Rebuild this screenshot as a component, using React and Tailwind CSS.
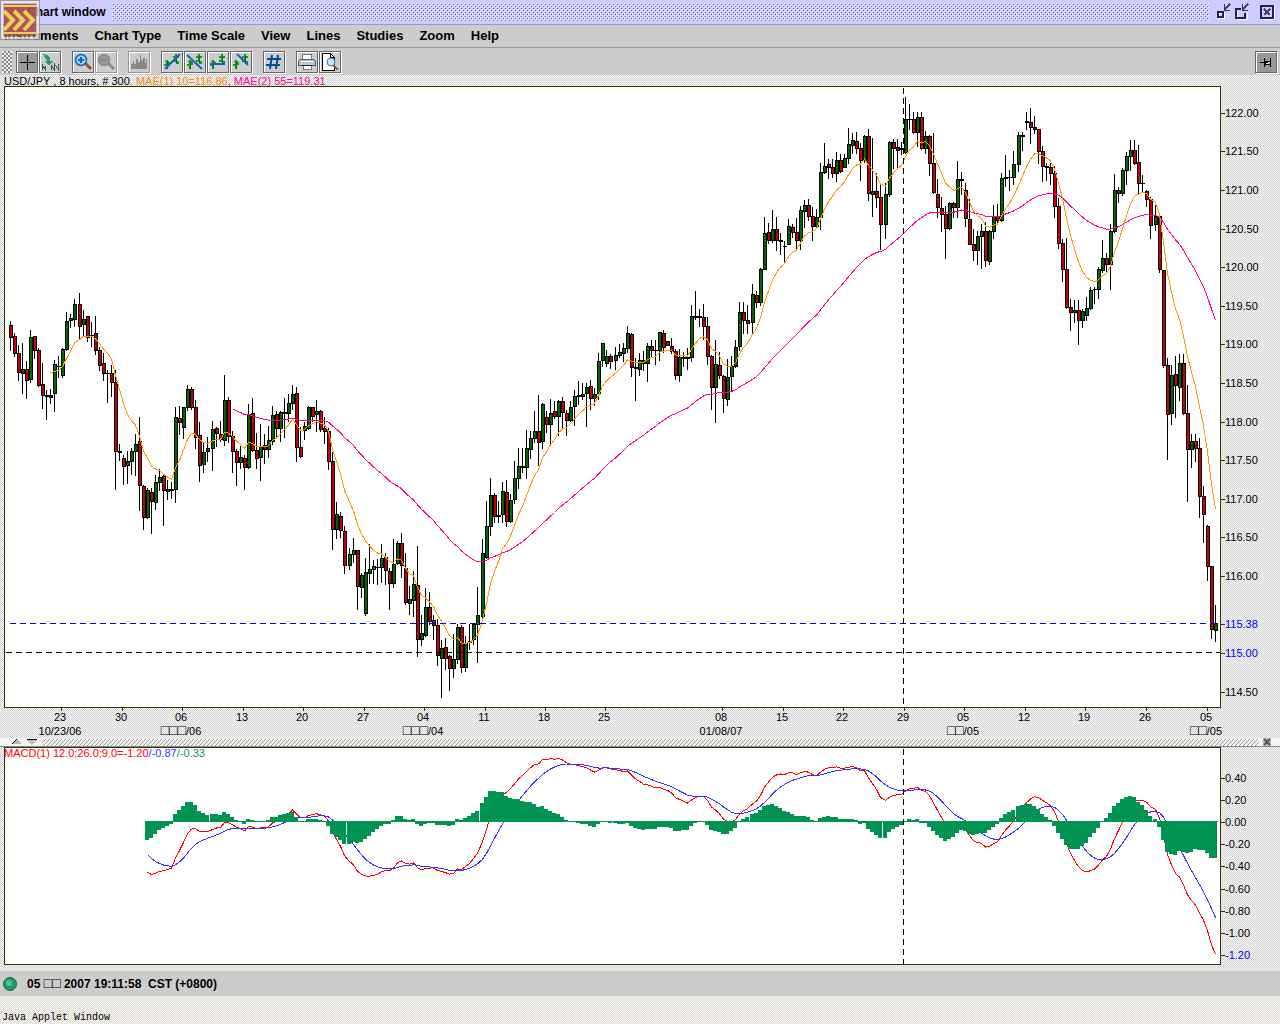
import React from "react";

// one entry per 8h candle: direction, then high, body top, body bottom, low (plot rows)
const RAW = `
r321,325,337,351 r333,336,353,357 r345,353,372,381 g343,369,373,394 r361,369,380,399 g330,337,379,383
r336,336,350,359 r348,350,385,387 r363,384,395,409 r390,395,396,420 g389,395,397,404 g360,364,393,412
g356,366,366,378 g348,349,375,378 g312,321,349,351 g314,318,320,328 g299,304,319,327 r293,304,326,339
g310,319,324,337 r316,316,337,342 r322,335,335,347 r316,333,350,355 r347,350,365,371 r353,363,373,381
r370,373,373,403 r365,373,382,397 r370,382,451,490 r444,451,452,461 r455,458,466,485 g451,461,465,484
g448,451,461,475 g434,444,451,476 r417,441,485,511 r485,486,517,530 g488,490,517,519 r488,492,501,534
g475,482,502,510 g469,477,482,491 r475,476,490,526 g480,489,491,500 g482,489,490,499 g407,417,489,503
r406,418,422,435 g407,407,427,439 g385,389,407,411 r387,389,407,410 r400,407,437,449 r422,435,465,482
g442,452,464,473 g437,448,451,462 g421,429,448,471 r427,428,433,447 r421,434,439,442 g375,400,440,446
r397,400,436,443 r431,436,451,473 r449,451,462,486 g446,457,462,469 r455,458,467,490 g404,414,467,469
r398,413,450,452 r433,450,458,469 g424,446,457,481 r434,445,449,464 g426,440,449,458 g406,415,441,445
r411,414,428,438 g411,412,428,442 g398,412,413,438 g394,403,413,422 g385,394,403,410 r387,393,447,462
r427,447,456,458 g422,426,430,440 g406,407,428,430 r407,407,416,422 g400,411,414,432 r410,411,429,432
r417,428,431,444 r428,431,461,470 r452,461,529,550 g502,514,529,539 r512,516,530,538 r526,531,565,574
g548,554,565,570 g538,550,554,563 r550,550,586,610 g573,575,587,598 g558,572,613,616 g544,569,573,584
g560,566,569,584 g559,567,567,585 g544,558,567,583 r553,557,570,585 r568,571,583,610 g539,564,583,588
g541,543,563,565 r533,543,565,578 r553,568,602,605 g586,599,603,615 g571,584,600,617 r546,585,639,657
g615,633,639,646 g588,607,635,637 r592,607,621,625 r615,620,625,640 r619,625,655,666 g640,648,658,698
r638,647,658,670 r655,656,668,691 g634,659,668,678 g624,627,659,664 r625,627,667,673 g636,643,667,672
g624,641,642,650 g624,624,639,645 g587,615,624,663 g539,553,616,618 g501,526,557,559 g478,495,526,536
r493,495,516,523 g501,515,516,523 g482,491,514,523 r480,492,521,527 g494,500,521,523 g461,478,499,504
g448,466,478,489 r448,466,467,473 g430,448,467,479 g431,438,449,459 g411,431,438,443 r395,431,442,466
g403,404,441,449 r411,417,424,433 g399,413,424,446 r401,411,416,419 g400,401,416,436 r397,401,412,430
r410,413,420,436 g401,407,420,422 g390,396,406,426 g381,395,396,405 g383,394,396,400 g383,387,393,427
r380,386,398,410 g388,394,398,406 g353,361,393,400 g343,343,360,367 g350,356,363,367 r354,356,361,369
g347,355,360,370 g344,352,355,358 g343,348,353,362 g326,333,348,353 r333,334,367,377 r358,367,368,401
g353,360,369,376 r351,360,363,371 g343,346,363,382 r340,346,350,358 g340,350,350,365 g332,332,350,361
r330,333,347,353 r341,341,345,346 r338,346,351,354 r349,351,375,380 g349,357,375,382 g352,357,358,367
r348,357,358,370 g305,316,357,362 g291,316,317,320 r309,316,317,327 r304,317,326,340 r317,326,356,365
r355,356,387,410 g340,364,387,423 r352,365,375,379 r375,376,398,413 g359,377,399,406 g356,366,376,391
g340,347,366,368 g302,312,346,351 r302,312,320,334 r305,320,323,334 g284,294,322,334 r291,295,302,308
g268,269,302,306 g217,233,269,270 r223,232,240,244 g210,229,240,243 r217,229,240,251 r233,240,241,255
r241,246,246,263 g219,226,244,245 r224,227,232,238 r218,232,240,249 g206,210,240,250 g200,205,211,228
r199,205,216,221 r207,216,226,241 g209,217,226,228 g163,172,217,230 g143,166,172,174 r159,164,167,179
r159,167,173,178 g152,160,173,182 r154,160,171,173 g154,158,167,168 g128,144,158,164 g133,140,145,154
r132,141,148,154 r143,148,160,181 g135,136,160,163 r129,136,193,201 g138,191,194,217 r173,191,197,208
r183,197,224,250 g183,194,224,239 g141,142,194,197 r139,142,148,169 r139,147,150,169 r142,148,149,155
g97,119,152,154 g104,119,119,130 r112,119,132,134 g112,117,132,147 r112,117,148,150 g131,136,148,154
r135,136,163,176 r133,163,192,194 r179,194,207,218 r197,208,214,232 r206,214,228,259 g202,203,228,230
r202,203,207,218 g161,179,207,218 r172,179,180,195 r183,190,218,227 r199,219,244,245 r229,244,250,261
g231,236,250,265 g224,231,236,269 r222,231,260,267 g230,231,261,265 g205,216,231,239 r204,216,220,224
g173,178,220,222 g155,177,178,187 g170,177,177,191 g151,164,177,185 g132,135,164,172 r132,135,136,151
g112,121,122,130 r108,122,127,144 r116,127,129,134 r129,129,151,164 r146,151,166,182 r163,166,167,181
r163,167,173,185 r166,173,206,218 r198,206,243,249 r239,243,269,282 r238,269,307,309 r299,307,312,331
g300,310,312,323 r300,310,320,345 g309,311,320,328 g297,308,315,321 g287,290,308,310 g287,289,289,304
g267,269,289,299 g240,258,270,273 r253,258,264,272 g224,231,264,290 g174,190,231,233 r187,190,193,203
g168,170,193,196 g152,156,170,185 g140,150,156,171 r140,150,163,165 r145,162,183,194 r175,183,183,193
r190,191,199,207 r197,199,225,239 g205,216,224,231 r216,216,269,273 r270,270,365,368 r358,365,414,460
g365,375,413,425 r356,374,385,418 g354,363,387,401 r354,363,413,415 r385,413,449,502 g434,441,449,468
r434,441,448,462 r438,448,496,518 r486,496,514,543 r525,526,566,581 r566,566,629,639 g605,623,630,642`;

const xAt = (i) => 10 + Math.round(i * 4.03);

const CANDLES = RAW.trim()
  .split(/\s+/)
  .map((s, i) => {
    const [high, top, bottom, low] = s.slice(1).split(",").map(Number);
    const up = s[0] === "g";
    return { x: xAt(i), high, top, bottom, low, up, close: up ? top : bottom };
  });

// exponential average, seeded with the simple average of the first n values
function ema(values, n) {
  const out = [];
  let prev = values.slice(0, n).reduce((a, b) => a + b, 0) / n;
  values.forEach((v, i) => {
    if (i < n - 1) return out.push(null);
    if (i >= n) prev += ((v - prev) * 2) / (n + 1);
    out.push(prev);
  });
  return out;
}

const closes = CANDLES.map((c) => c.close);
const mae10 = ema(closes, 10);
const mae55 = ema(closes, 55);
const fast = ema(closes, 12);
const slow = ema(closes, 26);
const ZERO = 821;
const macd = closes.map((_, i) => (i < 25 ? null : (fast[i] - slow[i]) * 1.433));
const signal = [...Array(25).fill(null), ...ema(macd.slice(25), 9)];

const line = (values, from, base = 0) =>
  values
    .map((v, i) => (i < from ? "" : `${xAt(i) + 0.5},${(v + base + 0.5).toFixed(1)}`))
    .join(" ")
    .trim();

// the month name has no glyphs in the applet's font, so it shows as boxes
const DATES = [
  { x: 60, day: "23", date: "10/23/06" },
  { x: 121, day: "30" },
  { x: 181, day: "06", month: "□□□", date: "/06" },
  { x: 242, day: "13" },
  { x: 302, day: "20" },
  { x: 363, day: "27" },
  { x: 423, day: "04", month: "□□□", date: "/04" },
  { x: 484, day: "11" },
  { x: 544, day: "18" },
  { x: 604, day: "25" },
  { x: 721, day: "08", date: "01/08/07" },
  { x: 782, day: "15" },
  { x: 842, day: "22" },
  { x: 903, day: "29" },
  { x: 963, day: "05", month: "□□", date: "/05" },
  { x: 1024, day: "12" },
  { x: 1084, day: "19" },
  { x: 1145, day: "26" },
  { x: 1206, day: "05", month: "□□", date: "/05" },
];

const PRICES = [
  [113, "122.00"], [151, "121.50"], [190, "121.00"], [229, "120.50"], [267, "120.00"],
  [306, "119.50"], [344, "119.00"], [383, "118.50"], [422, "118.00"], [460, "117.50"],
  [499, "117.00"], [537, "116.50"], [576, "116.00"], [624, "115.38", true],
  [653, "115.00", true], [692, "114.50"],
];

const LEVELS = [
  [778, "0.40"], [800, "0.20"], [822, "0.00"], [844, "-0.20"], [866, "-0.40"],
  [889, "-0.60"], [911, "-0.80"], [933, "-1.00"], [955, "-1.20", true],
];

const chartText = "[font-family:'Liberation_Sans',Arial,sans-serif] text-[11px]";
const dither =
  "bg-[repeating-conic-gradient(#d0d0d0_0_25%,#fafafa_0_50%)] bg-[length:2px_2px]";

function AxisLabels({ items }) {
  return items.map(([y, label, current]) => (
    <g key={label}>
      <path d={`M1221 ${y + 0.5}h4`} stroke="#333300" />
      <text x="1225" y={y + 4} fill={current ? "#0000ff" : "#000"}>
        {label}
      </text>
    </g>
  ));
}

function PriceChart() {
  return (
    <svg viewBox="0 86 1280 652" className={`block h-auto w-full ${chartText}`} role="img" aria-label="USD/JPY candles">
      <defs>
        <pattern id="down" width="2" height="2" patternUnits="userSpaceOnUse">
          <rect width="2" height="2" fill="#d00000" />
          <rect width="1" height="1" fill="#a80000" />
        </pattern>
      </defs>
      <rect x="4.5" y="86.5" width="1216" height="621" fill="#fff" stroke="#333300" />
      <g shapeRendering="crispEdges">
        {CANDLES.map((c) => (
          <g key={c.x}>
            <rect x={c.x} y={c.high} width="1" height={c.low - c.high} />
            <rect x={c.x - 1} y={c.top} width="4" height={c.bottom - c.top + 1} />
            {c.bottom - c.top > 1 && (
              <rect
                x={c.x}
                y={c.top + 1}
                width="2"
                height={c.bottom - c.top - 1}
                fill={c.up ? "#006600" : "url(#down)"}
              />
            )}
          </g>
        ))}
        <g fill="none">
          <polyline points={line(mae55, 55)} stroke="#ff0099" />
          <polyline points={line(mae10, 10)} stroke="#ff9900" />
          <path d="M10 623.5H1220" stroke="#0000ff" strokeDasharray="6 4" />
          <path d="M6 652.5H1220" stroke="#000" strokeDasharray="6 4" />
          <path d="M903.5 88V707" stroke="#000" strokeDasharray="6 4" />
        </g>
      </g>
      <AxisLabels items={PRICES} />
      {DATES.map(({ x, day, month, date }) => (
        <g key={x} textAnchor="middle">
          <path d={`M${x + 1.5} 708v3`} stroke="#333300" />
          <text x={x} y="721">{day}</text>
          {date && (
            <text x={x} y="735">
              {month && <tspan className="text-[14px]">{month}</tspan>}
              {date}
            </text>
          )}
        </g>
      ))}
    </svg>
  );
}

function MacdChart() {
  return (
    <svg viewBox="0 747 1280 224" className={`block h-auto w-full ${chartText}`} role="img" aria-label="MACD study">
      <defs>
        <pattern id="hist" width="2" height="2" patternUnits="userSpaceOnUse">
          <rect width="2" height="2" fill="#009955" />
          <rect width="1" height="1" fill="#008044" />
        </pattern>
      </defs>
      <rect x="4.5" y="747.5" width="1216" height="217" fill="#fff" stroke="#333300" />
      <g shapeRendering="crispEdges">
        <g fill="none">
          <polyline points={line(macd, 34, ZERO)} stroke="#ff0000" />
          <polyline points={line(signal, 34, ZERO)} stroke="#3333ff" />
        </g>
        <g fill="url(#hist)">
          <rect x="145" y={ZERO} width="1073" height="1" />
          {CANDLES.map((c, i) => {
            if (i < 34) return null;
            const h = Math.round(macd[i] - signal[i]);
            return (
              <rect key={c.x} x={c.x - 2} y={Math.min(ZERO, ZERO + h)} width="4" height={Math.abs(h) + 1} />
            );
          })}
        </g>
        <path d="M903.5 749V964" stroke="#000" strokeDasharray="6 4" />
      </g>
      <text x="4" y="757" fill="#ff0000">
        MACD(1) 12.0;26.0;9.0=-1.20<tspan fill="#3333ff">/-0.87</tspan>
        <tspan fill="#009966">/-0.33</tspan>
      </text>
      <AxisLabels items={LEVELS} />
    </svg>
  );
}

function Glyph({ children }) {
  return (
    <svg viewBox="0 0 20 20" className="size-5" fill="none" shapeRendering="crispEdges" aria-hidden="true">
      {children}
    </svg>
  );
}

function ToolButton({ label, active, disabled, className = "", children }) {
  return (
    <button
      type="button"
      aria-label={label}
      disabled={disabled}
      className={`flex size-[22px] items-center justify-center border shadow-[inset_1px_1px_0_#fff,1px_1px_0_#fff] ${
        disabled ? "border-[#999]" : "border-[#666]"
      } ${active ? "bg-[#999]" : "bg-[#ccc]"} ${className}`}
    >
      <Glyph>{children}</Glyph>
    </button>
  );
}

function Lens({ rim, glass, handle, sign }) {
  return (
    <>
      <path d="M12 11l6 6" stroke={handle} strokeWidth="3" shapeRendering="auto" />
      <circle cx="8" cy="8" r="5.500" fill={glass} stroke={rim} strokeWidth="1.500" shapeRendering="auto" />
      <path d={sign} stroke={rim} strokeWidth="2" />
    </>
  );
}

function Zigzag({ blue }) {
  return (
    <>
      <path d="M3 10h4l-2-3zM4 10h4v3H6v4H4v-3H2v-2h2zM13 2h2v2h2v2h-2v3h2v3h-3v-2h-3V8h2V6h-2V4h2z" fill="#119922" />
      <path d="M5 10v7M14 4v7" stroke="#0b6b1b" />
      <path d={blue} stroke="#1a5fc8" strokeWidth="2" shapeRendering="auto" />
    </>
  );
}

const MENUS = ["Instruments", "Chart Type", "Time Scale", "View", "Lines", "Studies", "Zoom", "Help"];

function TitleBar() {
  return (
    <header className="flex h-[25px] items-center border-b border-[#9999cc] bg-[#ccccff] pr-1 pl-[5px]">
      <svg viewBox="0 0 16 16" className="size-4" aria-hidden="true">
        <path d="M1 4l4 8 2-6 3 6" fill="none" stroke="#c00" strokeWidth="2" />
        <path d="M9 3h5v5" fill="none" stroke="#090" strokeWidth="2" />
      </svg>
      <h1 className="ml-[6px] text-[12px] leading-4 font-bold">Chart window</h1>
      <div className="mx-[6px] h-[18px] flex-1 bg-[radial-gradient(circle_at_0.5px_0.5px,#fff_0.6px,transparent_0.7px),radial-gradient(circle_at_1.5px_1.5px,#666699_0.6px,transparent_0.7px),radial-gradient(circle_at_2.5px_2.5px,#fff_0.6px,transparent_0.7px),radial-gradient(circle_at_3.5px_3.5px,#666699_0.6px,transparent_0.7px)] bg-[length:4px_4px]" />
      <div className="flex">
        <button type="button" aria-label="Minimize" className="size-[18px]">
          <svg viewBox="0 0 18 18" className="size-[18px]" fill="none" shapeRendering="crispEdges">
            <path d="M4 10h5v5H4z" stroke="#fff" strokeWidth="2" />
            <path d="M3 9h5v5H3z" stroke="#222244" strokeWidth="2" />
            <path d="M15 1l-6 6" stroke="#444477" strokeWidth="2" />
            <path d="M9.500 1v6.500H15" stroke="#333366" />
          </svg>
        </button>
        <button type="button" aria-label="Restore" className="size-[18px]">
          <svg viewBox="0 0 18 18" className="size-[18px]" fill="none" shapeRendering="crispEdges">
            <path d="M7 6.500H4v10h10.500V9" stroke="#fff" />
            <path d="M8 6H3v9h9v-5" stroke="#222244" strokeWidth="2" />
            <path d="M15 1l-6 6" stroke="#444477" strokeWidth="2" />
            <path d="M9.500 1v6.500H15" stroke="#333366" />
          </svg>
        </button>
        <button type="button" aria-label="Close" className="ml-[7px] size-[18px]">
          <svg viewBox="0 0 18 18" className="size-[18px]" fill="none" shapeRendering="crispEdges">
            <path d="M3.500 3.500h13v13h-13z" stroke="#fff" />
            <path d="M3 3h12v12H3z" stroke="#222244" strokeWidth="2" />
            <path d="M6 6l6 6M12 6l-6 6" stroke="#444477" strokeWidth="2" />
          </svg>
        </button>
      </div>
    </header>
  );
}

function ToolBar() {
  return (
    <div className="flex h-[27px] items-center bg-[#ccc] pr-[3px] pl-[2px]">
      <div className="mr-1 h-[22px] w-[10px] bg-[repeating-conic-gradient(#888_0_25%,#eee_0_50%)] bg-[length:4px_4px]" />
      <div className="flex gap-[11px]">
        <div className="flex gap-px">
          <ToolButton label="Crosshair" active>
            <path d="M10.500 3v15M3 10.500h15" stroke="#000" />
          </ToolButton>
          <ToolButton label="Draw">
            <path d="M3 2l4 1 3 3v3h3l-4 5-5-5h3z" fill="#339966" />
            <path d="M2.500 18v-5l3 5v-4M11.500 18v-4l3 4v-6l4 6v-6" stroke="#226644" />
          </ToolButton>
        </div>
        <div className="flex gap-px">
          <ToolButton label="Zoom in">
            <Lens rim="#1c5fb4" glass="#8fd4ff" handle="#99521c" sign="M5 8h6M8 5v6" />
          </ToolButton>
          <ToolButton label="Zoom out" disabled>
            <Lens rim="#8a8a8a" glass="#999" handle="#8a8a8a" sign="M5 8h6" />
          </ToolButton>
        </div>
        <ToolButton label="Volume" disabled>
          <path d="M2 17v-5h2V9h1v3h2V7h2v3h2V3h1v5h2V6h2v5h1V7h1v10z" fill="#888" />
        </ToolButton>
        <div className="flex gap-px">
          <ToolButton label="Trend line">
            <Zigzag blue="M3 17L18 2" />
          </ToolButton>
          <ToolButton label="Falling line">
            <Zigzag blue="M2 3l15 14" />
          </ToolButton>
          <ToolButton label="Horizontal line">
            <Zigzag blue="M2 12h15" />
          </ToolButton>
          <ToolButton label="Segment">
            <Zigzag blue="M6 2l11 11" />
          </ToolButton>
        </div>
        <ToolButton label="Grid">
          <path d="M8 3L6 17M14 3l-2 14M3 7h14M2 13h14" stroke="#004c99" strokeWidth="2" shapeRendering="auto" />
        </ToolButton>
        <div className="flex gap-px">
          <ToolButton label="Print">
            <path d="M5.500 2.500h9v5h-9zM6.500 13.500h8v4h-8z" fill="#fff" stroke="#777" />
            <path d="M3.500 7.500h13l2 2v4h-17v-4z" fill="#b8ccd8" stroke="#556" />
            <path d="M4 9.500h12" stroke="#fff" />
            <path d="M5 13.500h10" stroke="#223" />
          </ToolButton>
          <ToolButton label="Print preview">
            <path d="M2.500 1.500h8l4 4v13h-12z" fill="#fff" stroke="#000" />
            <path d="M10.500 2v3.500H14" stroke="#000" />
            <path d="M13 13l5 5" stroke="#99521c" strokeWidth="2" />
            <circle cx="11" cy="10" r="4" fill="#bfe6ff" stroke="#3377bb" shapeRendering="auto" />
          </ToolButton>
        </div>
      </div>
      <ToolButton label="Pin window" active className="ml-auto">
        <path d="M4 10.500h5M8.500 6v9M14.500 6v9" stroke="#000" />
        <path d="M9 9h3v4H9z" fill="#000" />
        <path d="M12 10.500h2M10 11.500h2" stroke="#fff" />
        <path d="M12 12.500h2M12 9.500h2" stroke="#000" />
      </ToolButton>
    </div>
  );
}

function Splitter() {
  return (
    <div className="flex h-[9px] items-center justify-between border-b border-[#888] bg-[#f4f4f4] pr-[9px] pl-3">
      <svg viewBox="0 0 26 6" className="h-[6px] w-[26px]" aria-hidden="true">
        <path d="M0 5l5-5 5 5z" fill="#bbb" />
        <path d="M0 5l5-5" stroke="#000" />
        <path d="M15 1h10l-5 5z" fill="#bbb" />
        <path d="M15 0.500h10" stroke="#000" />
      </svg>
      <svg className="mx-1 h-[7px] flex-1" aria-hidden="true">
        <defs>
          <pattern id="grip" width="4" height="4" patternUnits="userSpaceOnUse">
            <path d="M0 3h1v1H0zM1 2h1v1H1zM2 1h1v1H2zM3 0h1v1H3z" fill="#999" />
          </pattern>
        </defs>
        <rect width="100%" height="100%" fill="url(#grip)" shapeRendering="crispEdges" />
      </svg>
      <svg viewBox="0 0 8 8" className="size-2" aria-hidden="true">
        <rect width="8" height="8" fill="#bbb" />
        <path d="M1 1l6 6M7 1L1 7" stroke="#555" strokeWidth="2" />
      </svg>
    </div>
  );
}

function Logo() {
  return (
    <svg viewBox="0 0 40 40" className="absolute top-0 left-0 size-10" aria-hidden="true">
      <rect width="40" height="40" fill="#aaa" fillOpacity="0.45" />
      <rect x="0.500" y="0.500" width="39" height="39" fill="none" stroke="#888" strokeOpacity="0.7" />
      <rect x="2" y="2" width="36" height="36" fill="none" stroke="#fff" strokeWidth="2" strokeOpacity="0.6" />
      <rect x="4" y="4" width="32" height="32" fill="#b04050" fillOpacity="0.85" />
      <g fill="none" stroke="#eedc50" strokeOpacity="0.92">
        <path d="M4 6h32M4 33h32" strokeWidth="2" />
        <path d="M4 11l9 9-9 10M14 11l9 9-9 10M24 11l9 9-9 10" strokeWidth="4" />
      </g>
    </svg>
  );
}

const App = () => {
  return (
    <div className="relative flex min-h-screen flex-col bg-[repeating-conic-gradient(#d8d8d8_0_25%,#fffaf0_0_50%)] bg-[length:2px_2px] text-black [font-family:'Liberation_Sans',Arial,sans-serif]">
      <TitleBar />
      <nav className="flex h-[23px] items-center gap-4 border-b border-[#999] bg-[#ccc] pl-1 text-[13px] leading-4 font-bold">
        {MENUS.map((name) => (
          <button key={name} type="button">
            {name}
          </button>
        ))}
      </nav>
      <ToolBar />
      <main className={dither}>
        <p className="h-[11px] pl-1 text-[11px] leading-[12px] whitespace-pre">
          USD/JPY , 8 hours, # 300<span className="text-[#ff8800]">, MAE(1) 10=116.86</span>
          <span className="text-[#ff0099]">, MAE(2) 55=119.31</span>
        </p>
        <PriceChart />
        <Splitter />
        <MacdChart />
      </main>
      <div className="flex h-[25px] items-center bg-[#ccc] pl-[3px] text-[12px] leading-4 font-bold">
        <svg viewBox="0 0 14 14" className="size-[14px]" aria-hidden="true">
          <circle cx="7" cy="7" r="6.500" fill="#229966" stroke="#0a6b40" />
          <circle cx="6" cy="6" r="3" fill="#4fc08d" />
        </svg>
        <span className="ml-[10px] whitespace-pre">
          05 <span className="text-[14px] font-normal">□□</span> 2007 19:11:58  CST (+0800)
        </span>
      </div>
      <footer className="mt-auto pl-[2px] text-[10px] leading-[13px] [font-family:'Liberation_Mono',monospace]">
        Java Applet Window
      </footer>
      <Logo />
    </div>
  );
};

export default App;
